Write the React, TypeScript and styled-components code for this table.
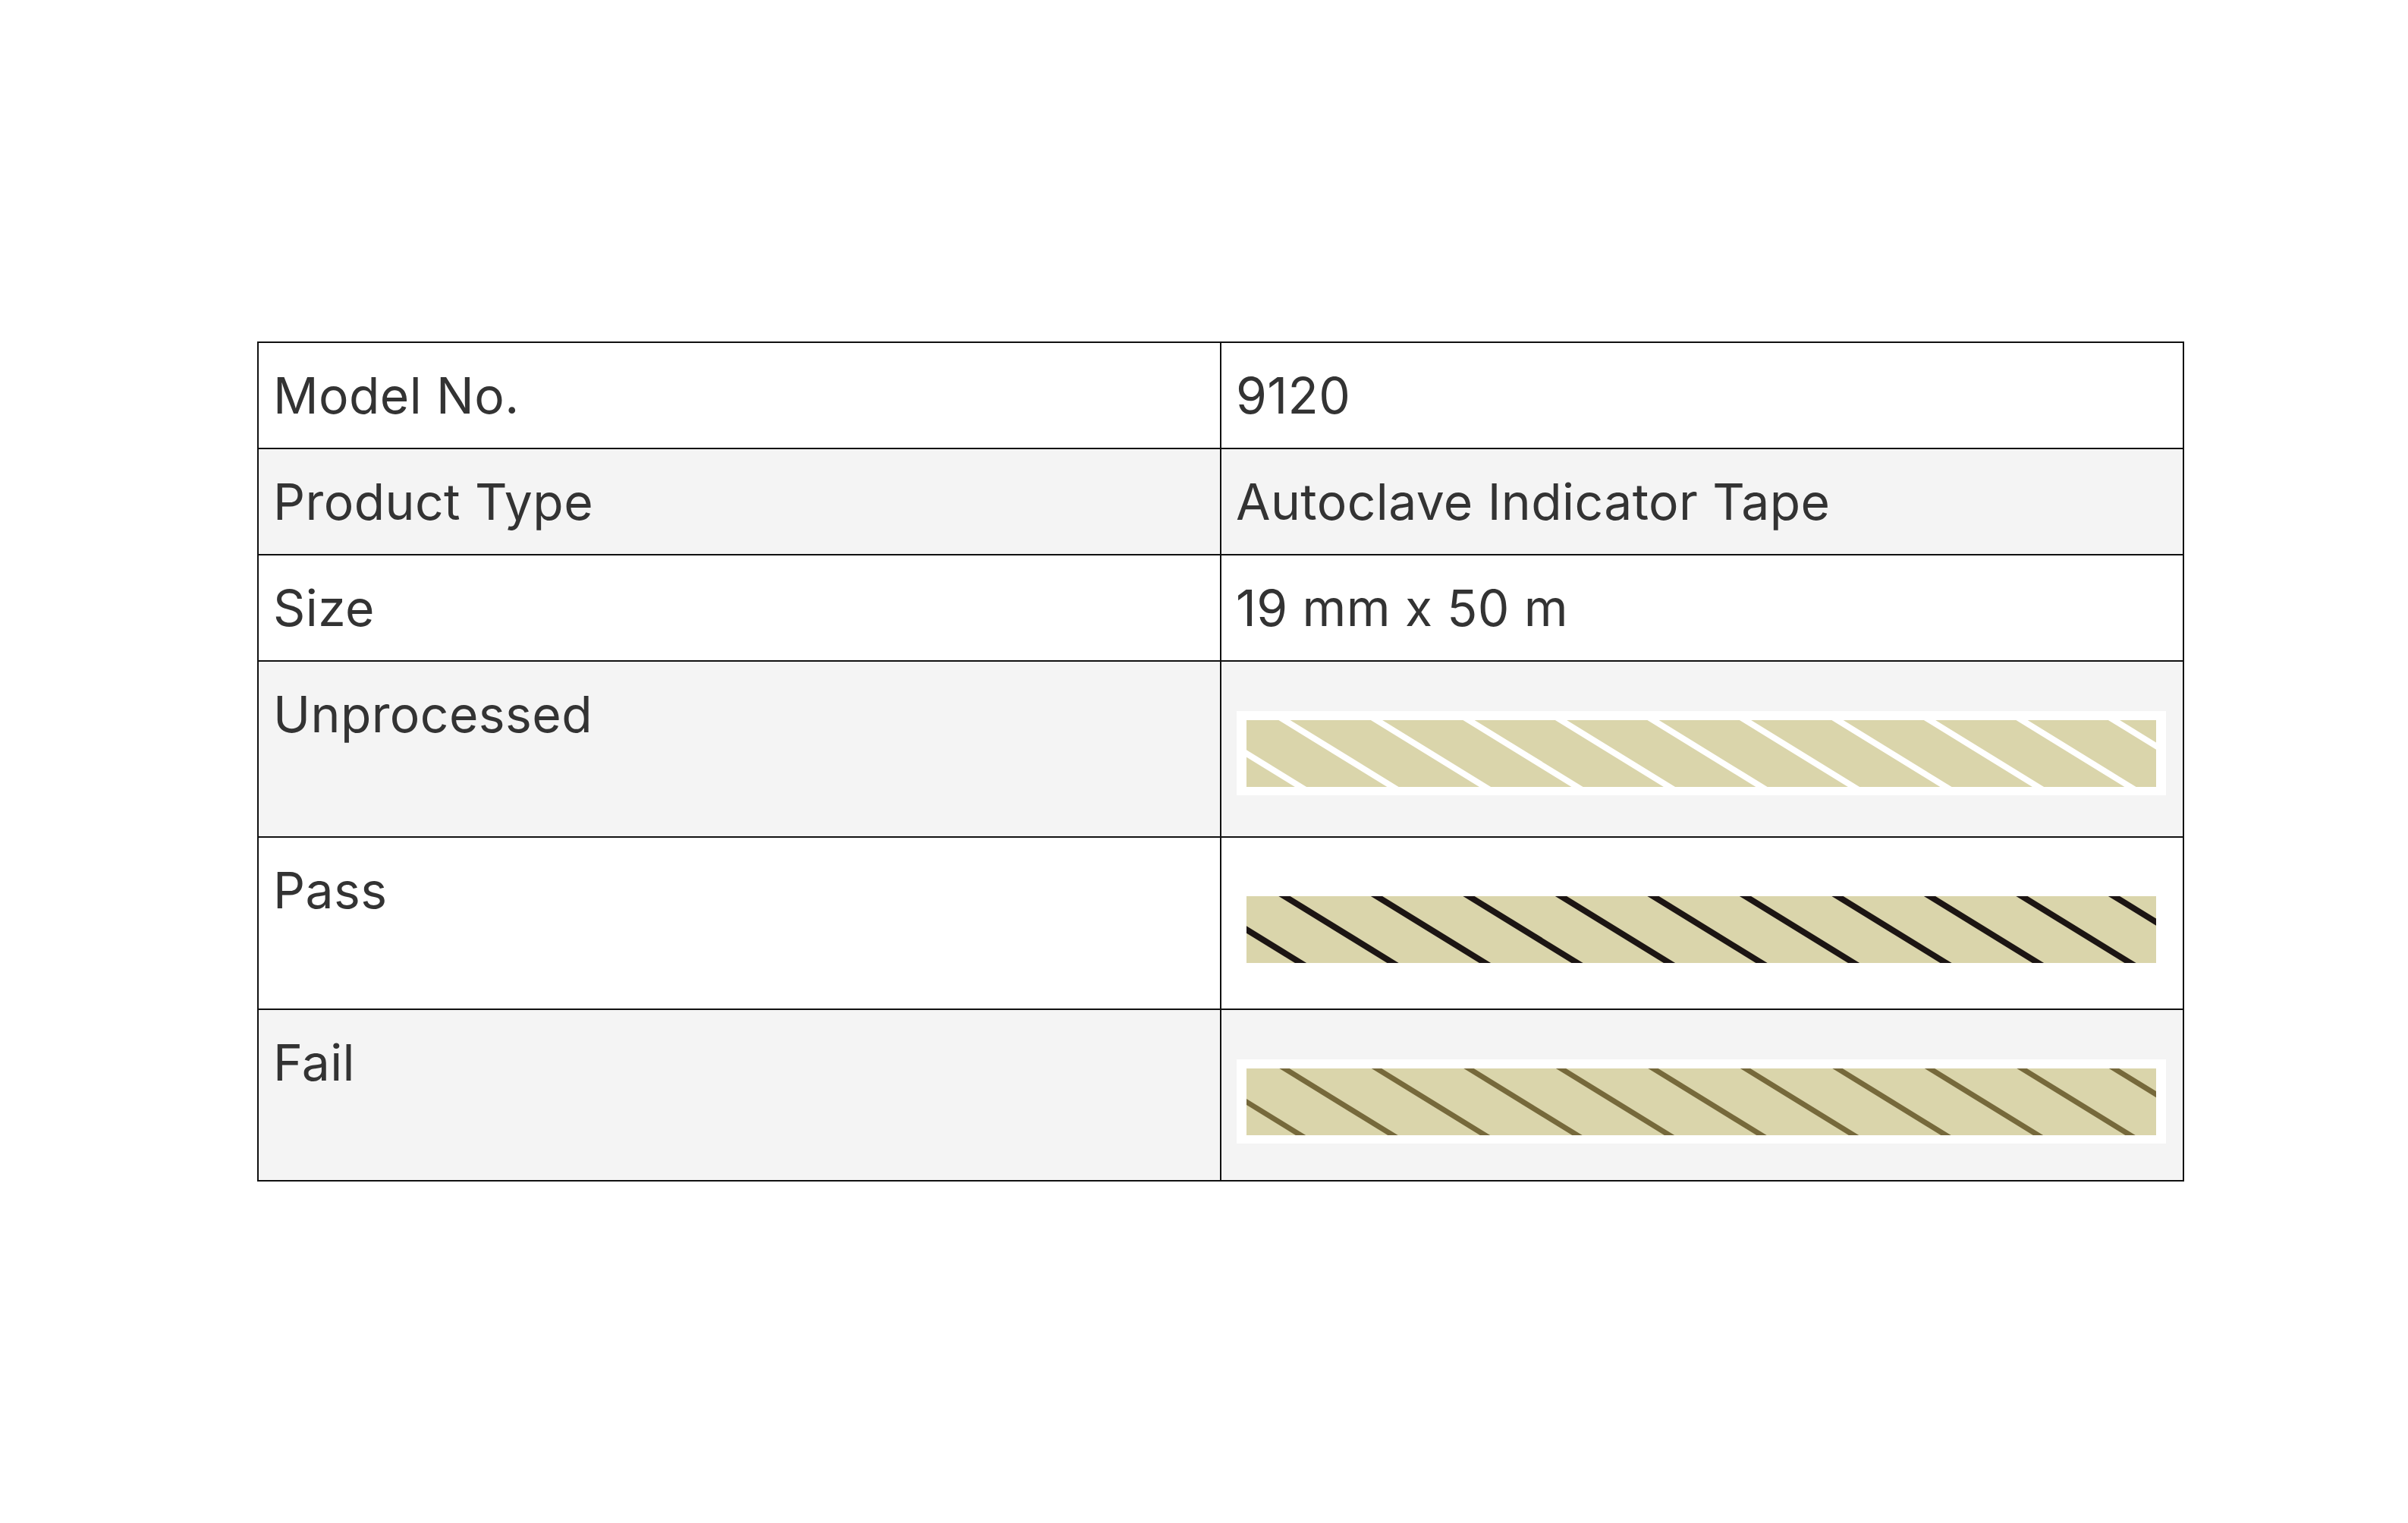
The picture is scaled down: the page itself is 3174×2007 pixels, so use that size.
import React from "react";
import styled, { createGlobalStyle } from "styled-components";

const Global = createGlobalStyle`
  html, body { margin: 0; padding: 0; background: #ffffff; }
  body { font-family: Inter, "Noto Sans", sans-serif; }
`;

const Page = styled.div`
  padding: 450px 0 0 339px;
  min-height: 2007px;
  box-sizing: border-box;
`;

const Table = styled.div`
  width: 2540px;
  display: flex;
  flex-direction: column;
  border-top: 2px solid #111;
  border-left: 2px solid #111;
  box-sizing: border-box;
`;

const Row = styled.div<{ $shade: boolean }>`
  display: grid;
  grid-template-columns: 1fr 1fr;
  background: ${(p) => (p.$shade ? "#f4f4f4" : "#ffffff")};
`;

const Cell = styled.div`
  border-right: 2px solid #111;
  border-bottom: 2px solid #111;
  padding: 23px 22px 23px 19px;
  font-family: Inter, "Noto Sans", sans-serif;
  font-size: 66px;
  line-height: 92px;
  color: #333333;
  letter-spacing: 0.4px;
  white-space: nowrap;
`;

const ImageCell = styled.div<{ $bottom: number }>`
  border-right: 2px solid #111;
  border-bottom: 2px solid #111;
  padding: 65px 22px ${(p) => p.$bottom}px 20px;
`;

const TapeFrame = styled.div`
  background: #ffffff;
  padding: 12px 13px 11px 13px;
  height: 111px;
  box-sizing: border-box;
`;

const TapeSvg = styled.svg`
  display: block;
  width: 100%;
  height: 88px;
`;

type TapeProps = { stripe: string; width: number };

const Tape: React.FC<TapeProps> = ({ stripe, width }) => {
  const W = 1199;
  const H = 88;
  const run = 143;
  const lines = [];
  for (let k = -2; k <= 10; k++) {
    const x0 = 50 + 121.5 * k;
    const ext = 20;
    const dx = (ext * run) / H;
    lines.push(
      <line
        key={k}
        x1={x0 - dx}
        y1={-ext}
        x2={x0 + run + dx}
        y2={H + ext}
        stroke={stripe}
        strokeWidth={width}
      />
    );
  }
  return (
    <TapeFrame>
      <TapeSvg viewBox={`0 0 ${W} ${H}`} preserveAspectRatio="none">
        <rect x="0" y="0" width={W} height={H} fill="#dad5ab" />
        {lines}
      </TapeSvg>
    </TapeFrame>
  );
};

const textRows = [
  { label: "Model No.", value: "9120" },
  { label: "Product Type", value: "Autoclave Indicator Tape" },
  { label: "Size", value: "19 mm x 50 m" },
];

const tapeRows = [
  { label: "Unprocessed", stripe: "#ffffff", width: 8, bottom: 54 },
  { label: "Pass", stripe: "#1c1513", width: 8, bottom: 49 },
  { label: "Fail", stripe: "#76693b", width: 7, bottom: 48 },
];

export default function App() {
  return (
    <>
      <Global />
      <Page>
        <Table>
          {textRows.map((r, i) => (
            <Row key={r.label} $shade={i % 2 === 1}>
              <Cell>{r.label}</Cell>
              <Cell>{r.value}</Cell>
            </Row>
          ))}
          {tapeRows.map((r, i) => (
            <Row key={r.label} $shade={(i + 3) % 2 === 1}>
              <Cell>{r.label}</Cell>
              <ImageCell $bottom={r.bottom}>
                <Tape stripe={r.stripe} width={r.width} />
              </ImageCell>
            </Row>
          ))}
        </Table>
      </Page>
    </>
  );
}
